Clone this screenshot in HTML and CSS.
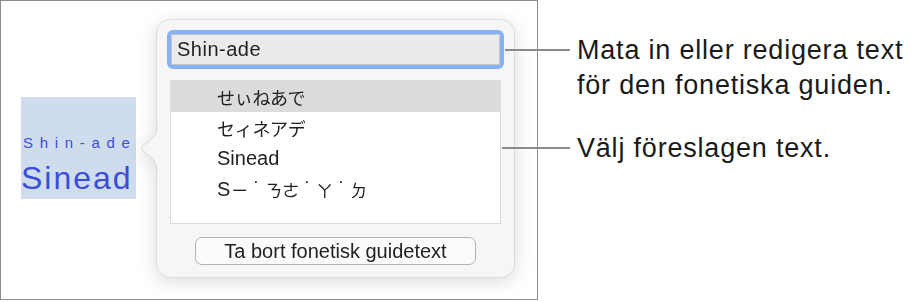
FILE: index.html
```html
<!DOCTYPE html>
<html lang="sv">
<head>
<meta charset="utf-8">
<title>Fonetisk guide</title>
<link rel="stylesheet" href="styles.css">
</head>
<body>
<div class="figure">
  <div class="frame">
    <div class="selection">
      <div class="ruby">Shin-ade</div>
      <div class="base">Sinead</div>
    </div>
    <div class="popover">
      <svg class="arrow" width="21" height="44" viewBox="0 0 21 44" aria-hidden="true">
        <path d="M21,0 L20,0 C20,9 14,13 8,17 Q1,21.5 8,26 C14,30 20,34 20,44 L21,44 Z" fill="#f6f6f6"/>
        <path d="M20,0 C20,9 14,13 8,17 Q1,21.5 8,26 C14,30 20,34 20,44" fill="none" stroke="#d6d6d6" stroke-width="1"/>
      </svg>
      <div class="field-ring">
        <div class="field">Shin-ade</div>
      </div>
      <div class="list">
        <div class="row selected ja">せぃねあで</div>
        <div class="row ja">セィネアデ</div>
        <div class="row">Sinead</div>
        <div class="row bopo"><span class="latin">S</span>ㄧ<span class="tone">˙</span>ㄋㄜ<span class="tone">˙</span>ㄚ<span class="tone">˙</span>ㄉ</div>
      </div>
      <div class="button">Ta bort fonetisk guidetext</div>
    </div>
  </div>
  <div class="callouts">
    <p class="note">Mata in eller redigera text<br>för den fonetiska guiden.</p>
    <p class="note second">Välj föreslagen text.</p>
  </div>
  <div class="leader leader-1"></div>
  <div class="leader leader-2"></div>
</div>
</body>
</html>
```

FILE: styles.css
```css
html, body {
  margin: 0;
  padding: 0;
  background: #ffffff;
}

body {
  font-family: "Liberation Sans", Arial, sans-serif;
  color: #1d1d1d;
}

.figure {
  position: relative;
  width: 921px;
  height: 302px;
  display: flex;
  align-items: flex-start;
}

.frame {
  box-sizing: border-box;
  width: 538px;
  height: 300px;
  border: 1px solid #8c8c8c;
  background: #ffffff;
  display: flex;
  align-items: flex-start;
  padding-left: 20px;
  flex: none;
}

.selection {
  width: 115px;
  height: 102px;
  margin-top: 96px;
  background: #cfdcee;
  box-sizing: border-box;
  padding-top: 37px;
  color: #3a4dd8;
  flex: none;
}

.ruby {
  font-size: 15px;
  line-height: 17px;
  letter-spacing: 6.7px;
  padding-left: 2px;
  white-space: nowrap;
}

.base {
  font-size: 32px;
  line-height: 36px;
  letter-spacing: 2px;
  margin-top: 9px;
  white-space: nowrap;
}

.popover {
  position: relative;
  box-sizing: border-box;
  width: 359px;
  margin-left: 20px;
  margin-top: 18px;
  padding: 10px 10px 12px;
  background: #f6f6f6;
  border: 1px solid #dcdcdc;
  border-radius: 14px;
  display: flex;
  flex-direction: column;
  filter: drop-shadow(0 4px 9px rgba(0, 0, 0, 0.14));
  flex: none;
}

.arrow {
  position: absolute;
  left: -20px;
  top: 107px;
  display: block;
}

.field-ring {
  box-sizing: border-box;
  height: 39px;
  border: 4px solid #88b1f5;
  border-radius: 6px;
  background: #88b1f5;
}

.field {
  box-sizing: border-box;
  height: 31px;
  border: 1px solid #c6c6c6;
  background: #ebebeb;
  font-size: 20px;
  letter-spacing: 0.5px;
  line-height: 29px;
  padding-left: 5px;
  color: #1f1f1f;
}

.list {
  box-sizing: border-box;
  margin: 11px 3px 0;
  height: 144px;
  border: 1px solid #dcdcdc;
  background: #ffffff;
}

.row {
  height: 31px;
  display: flex;
  align-items: center;
  padding-left: 46px;
  font-size: 20px;
  color: #222222;
  white-space: nowrap;
}

.row.selected {
  background: #dcdcdc;
}

.row.ja {
  font-family: "Noto Sans CJK JP", sans-serif;
  font-size: 18px;
  letter-spacing: -0.3px;
}

.row.bopo {
  font-family: "Noto Sans CJK TC", sans-serif;
  font-size: 17px;
}

.latin {
  font-family: "Liberation Sans", Arial, sans-serif;
  font-size: 20px;
  margin-right: 1px;
}

.tone {
  font-family: "Liberation Sans", Arial, sans-serif;
  font-size: 20px;
  display: inline-block;
  width: 17px;
  text-align: center;
}

.button {
  align-self: center;
  box-sizing: border-box;
  width: 281px;
  height: 28px;
  margin-top: 13px;
  border: 1px solid #b3b3b3;
  border-radius: 7px;
  background: #fbfbfb;
  font-size: 20px;
  line-height: 26px;
  text-align: center;
  color: #222222;
  white-space: nowrap;
}

.callouts {
  margin-left: 39px;
  padding-top: 33px;
  display: flex;
  flex-direction: column;
}

.note {
  margin: 0;
  font-size: 27px;
  line-height: 35px;
  letter-spacing: 0.8px;
  color: #1a1a1a;
  white-space: nowrap;
}

.note.second {
  margin-top: 28px;
}

.leader {
  position: absolute;
  height: 2px;
  background: #8a8a8a;
}

.leader-1 {
  left: 505px;
  top: 49px;
  width: 65px;
}

.leader-2 {
  left: 502px;
  top: 147px;
  width: 68px;
}
```
